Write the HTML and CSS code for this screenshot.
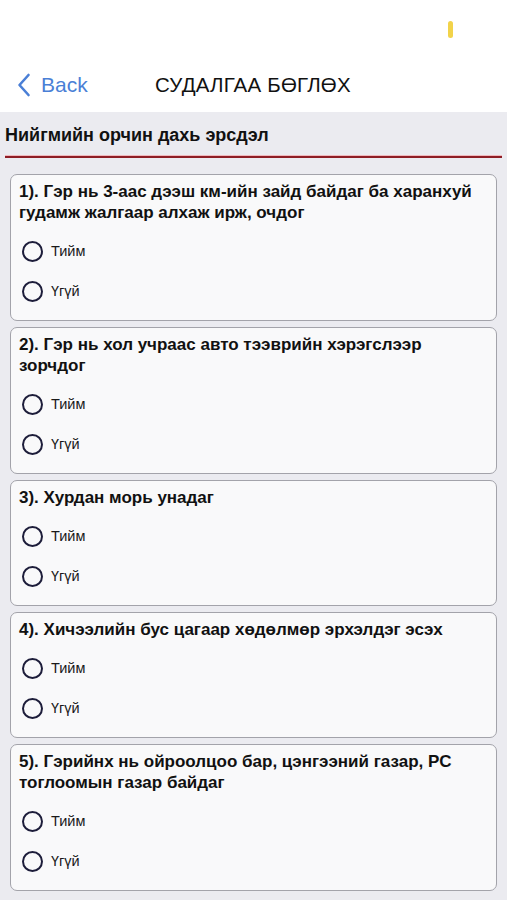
FILE: index.html
```html
<!DOCTYPE html>
<html lang="mn">
<head>
<meta charset="utf-8">
<title>СУДАЛГАА БӨГЛӨХ</title>
<link rel="stylesheet" href="styles.css">
</head>
<body>
<header class="top">
  <div class="status"><span class="status-dot"></span></div>
  <nav class="nav">
    <a class="back" href="#">
      <svg class="chev" width="14" height="24" viewBox="0 0 14 24"><path d="M11.5 2 L2.5 12 L11.5 22" fill="none" stroke="#4a7fd6" stroke-width="2.6" stroke-linecap="round" stroke-linejoin="round"/></svg>
      <span>Back</span>
    </a>
    <h1 class="title">СУДАЛГАА БӨГЛӨХ</h1>
  </nav>
</header>
<main class="content">
  <h2 class="section">Нийгмийн орчин дахь эрсдэл</h2>
  <div class="rule"></div>
  <div class="cards">
    <section class="card">
      <p class="q">1). Гэр нь 3-аас дээш км-ийн зайд байдаг ба харанхуй гудамж жалгаар алхаж ирж, очдог</p>
      <div class="opt"><span class="radio"></span><span class="lbl">Тийм</span></div>
      <div class="opt"><span class="radio"></span><span class="lbl">Үгүй</span></div>
    </section>
    <section class="card">
      <p class="q">2). Гэр нь хол учраас авто тээврийн хэрэгслээр зорчдог</p>
      <div class="opt"><span class="radio"></span><span class="lbl">Тийм</span></div>
      <div class="opt"><span class="radio"></span><span class="lbl">Үгүй</span></div>
    </section>
    <section class="card">
      <p class="q">3). Хурдан морь унадаг</p>
      <div class="opt"><span class="radio"></span><span class="lbl">Тийм</span></div>
      <div class="opt"><span class="radio"></span><span class="lbl">Үгүй</span></div>
    </section>
    <section class="card">
      <p class="q">4). Хичээлийн бус цагаар хөдөлмөр эрхэлдэг эсэх</p>
      <div class="opt"><span class="radio"></span><span class="lbl">Тийм</span></div>
      <div class="opt"><span class="radio"></span><span class="lbl">Үгүй</span></div>
    </section>
    <section class="card">
      <p class="q">5). Гэрийнх нь ойроолцоо бар, цэнгээний газар, PC тоглоомын газар байдаг</p>
      <div class="opt"><span class="radio"></span><span class="lbl">Тийм</span></div>
      <div class="opt"><span class="radio"></span><span class="lbl">Үгүй</span></div>
    </section>
  </div>
</main>
</body>
</html>
```
FILE: styles.css
```css
* { box-sizing: border-box; }
html, body { margin: 0; padding: 0; }
body {
  width: 507px;
  height: 900px;
  overflow: hidden;
  background: #ebebf0;
  font-family: "Liberation Sans", Arial, sans-serif;
  color: #111;
}
.top {
  background: #ffffff;
  height: 112px;
  display: flex;
  flex-direction: column;
}
.status {
  height: 60px;
  display: flex;
  justify-content: flex-end;
  padding: 21px 54px 0 0;
}
.status-dot {
  width: 5px;
  height: 17px;
  border-radius: 3px;
  background: #f2d34a;
}
.nav {
  height: 52px;
  display: flex;
  align-items: center;
  padding: 0 0 2px 17px;
}
.back {
  display: flex;
  align-items: center;
  gap: 10px;
  color: #4a7fd6;
  text-decoration: none;
  font-size: 21px;
  width: 138px;
}
.chev { display: block; }
.title {
  margin: 0;
  font-size: 20.5px;
  font-weight: 400;
  color: #111;
  letter-spacing: 0.2px;
}
.content {
  padding: 11px 0 0;
}
.section {
  margin: 0;
  padding-left: 5px;
  font-size: 18px;
  font-weight: 700;
  line-height: 24px;
  color: #111;
}
.rule {
  margin: 9px 5px 0;
  height: 2px;
  background: #8e1d25;
  box-shadow: 0 -1px 0 #f0b8bd;
}
.cards {
  display: flex;
  flex-direction: column;
  gap: 6.5px;
  padding: 16px 10px 0;
}
.card {
  background: #f9f9fa;
  border: 1px solid #a3a3aa;
  border-radius: 7px;
  padding: 6px 8px 8.5px 8px;
}
.q {
  margin: 0 0 8px;
  font-size: 17px;
  font-weight: 700;
  line-height: 21px;
  color: #111;
}
.opt {
  height: 40px;
  display: flex;
  align-items: center;
  gap: 8px;
  padding-left: 3px;
}
.radio {
  width: 21px;
  height: 21px;
  border: 2.2px solid #1d1d3a;
  border-radius: 50%;
  flex: none;
}
.lbl {
  font-size: 14.5px;
  color: #1a1a1a;
}
```
